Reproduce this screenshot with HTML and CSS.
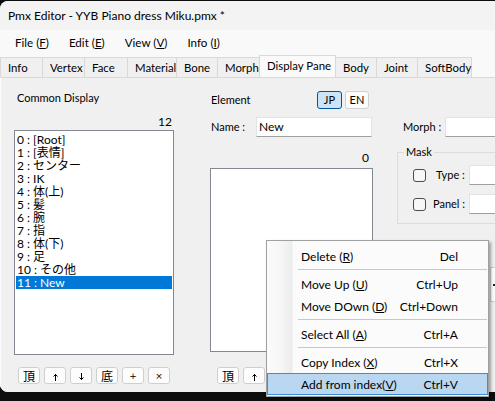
FILE: index.html
```html
<!DOCTYPE html>
<html lang="ja">
<head>
<meta charset="utf-8">
<title>Pmx Editor</title>
<link rel="stylesheet" href="styles.css">
</head>
<body>
<div class="screen">
  <div class="window">
    <div class="titlebar">Pmx Editor - YYB Piano dress Miku.pmx *</div>
    <div class="menubar">
      <span class="mi">File (<u>F</u>)</span>
      <span class="mi">Edit (<u>E</u>)</span>
      <span class="mi">View (<u>V</u>)</span>
      <span class="mi">Info (<u>I</u>)</span>
    </div>
    <div class="tabs">
      <div class="tab first t43">Info</div>
      <div class="tab t42">Vertex</div>
      <div class="tab t43">Face</div>
      <div class="tab t49">Material</div>
      <div class="tab t41">Bone</div>
      <div class="tab t42">Morph</div>
      <div class="tab active t76">Display Pane</div>
      <div class="tab t41">Body</div>
      <div class="tab t41">Joint</div>
      <div class="tab t54">SoftBody</div>
    </div>
    <div class="panel">
      <div class="col col-left">
        <div class="label head">Common Display</div>
        <div class="count">12</div>
        <div class="listbox main">
          <div class="item">0 : [Root]</div>
          <div class="item">1 : [表情]</div>
          <div class="item">2 : センター</div>
          <div class="item">3 : IK</div>
          <div class="item">4 : 体(上)</div>
          <div class="item">5 : 髪</div>
          <div class="item">6 : 腕</div>
          <div class="item">7 : 指</div>
          <div class="item">8 : 体(下)</div>
          <div class="item">9 : 足</div>
          <div class="item">10 : その他</div>
          <div class="item sel">11 : New</div>
        </div>
        <div class="btnrow">
          <div class="sb">頂</div>
          <div class="sb"><svg width="7" height="8" viewBox="0 0 7 8"><path d="M3.5 1V8M1.5 3.5L3.5 1.5L5.5 3.5" fill="none" stroke="#000" stroke-width="1"/></svg></div>
          <div class="sb"><svg width="7" height="8" viewBox="0 0 7 8"><path d="M3.5 0V7M1.5 4.5L3.5 6.5L5.5 4.5" fill="none" stroke="#000" stroke-width="1"/></svg></div>
          <div class="sb">底</div>
          <div class="sb small">+</div>
          <div class="sb small">×</div>
        </div>
      </div>
      <div class="col col-mid">
        <div class="elem-head">
          <span class="label">Element</span>
          <div class="lang">
            <div class="lb on">JP</div>
            <div class="lb">EN</div>
          </div>
        </div>
        <div class="field">
          <span class="label name-label">Name :</span>
          <div class="input name-input">New</div>
        </div>
        <div class="count">0</div>
        <div class="listbox mid"></div>
        <div class="btnrow mid-btns">
          <div class="sb">頂</div>
          <div class="sb"><svg width="7" height="8" viewBox="0 0 7 8"><path d="M3.5 1V8M1.5 3.5L3.5 1.5L5.5 3.5" fill="none" stroke="#000" stroke-width="1"/></svg></div>
        </div>
      </div>
      <div class="col col-right">
        <div class="field morph">
          <span class="label morph-label">Morph :</span>
          <div class="input wide"></div>
        </div>
        <fieldset class="mask">
          <legend>Mask</legend>
          <div class="chkrow">
            <span class="chk"></span>
            <span class="label type-label">Type :</span>
            <div class="input wide"></div>
          </div>
          <div class="chkrow">
            <span class="chk"></span>
            <span class="label panel-label">Panel :</span>
            <div class="input wide"></div>
          </div>
        </fieldset>
        <div class="sidebtn"><span class="tick"></span></div>
      </div>
    </div>
  </div>

  <div class="ctxmenu">
    <div class="mitem"><span>Delete (<u>R</u>)</span><span>Del</span></div>
    <div class="msep"></div>
    <div class="mitem"><span>Move Up (<u>U</u>)</span><span>Ctrl+Up</span></div>
    <div class="mitem"><span>Move DOwn (<u>D</u>)</span><span>Ctrl+Down</span></div>
    <div class="msep"></div>
    <div class="mitem"><span>Select All (<u>A</u>)</span><span>Ctrl+A</span></div>
    <div class="msep"></div>
    <div class="mitem"><span>Copy Index (<u>X</u>)</span><span>Ctrl+X</span></div>
    <div class="mitem hot"><span>Add from index(<u>V</u>)</span><span>Ctrl+V</span></div>
  </div>
</div>
</body>
</html>
```

FILE: styles.css
```css
html, body {
  margin: 0;
  padding: 0;
  overflow: hidden;
  background: #0d0d0d;
  width: 495px;
  height: 401px;
}

.screen {
  position: relative;
  width: 495px;
  height: 401px;
  overflow: hidden;
}

.window {
  margin-top: 1px;
  width: 530px;
  height: 391px;
  border-radius: 8px 8px 0 8px;
  overflow: hidden;
  background: #f0f0f0;
  display: flex;
  flex-direction: column;
  color: #000;
}

.titlebar {
  height: 29px;
  line-height: 30px;
  background: #f3f3f3;
  padding-left: 8px;
  font-family: Lato, "Noto Sans", sans-serif;
  font-size: 12px;
  flex: none;
}

.menubar {
  height: 25px;
  background: #f9f9f9;
  display: flex;
  align-items: center;
  padding-left: 5px;
  font-family: Lato, "Noto Sans", sans-serif;
  font-size: 11.6px;
  flex: none;
}

.mi {
  padding: 0 10px;
}

.tabs {
  height: 22px;
  background: #f9f9f9;
  display: flex;
  align-items: flex-end;
  flex: none;
}

.tab {
  box-sizing: border-box;
  height: 20px;
  line-height: 19px;
  padding-left: 7px;
  background: #f0f0f0;
  border-top: 1px solid #d9d9d9;
  border-right: 1px solid #d9d9d9;
  font-family: Lato, "Noto Sans CJK JP", sans-serif;
  font-size: 11.4px;
  white-space: nowrap;
}

.tab.first { border-left: 1px solid #d9d9d9; }

.tab.active {
  height: 22px;
  line-height: 19px;
  padding-bottom: 2px;
  background: #fafafa;
  border-left: 1px solid #d9d9d9;
  margin-left: -1px;
}

.t41 { width: 41px; }
.t42 { width: 42px; }
.t43 { width: 43px; }
.t49 { width: 49px; }
.t54 { width: 54px; }
.t76 { width: 77px; }

.panel {
  flex: 1;
  display: flex;
  align-items: flex-start;
  background: #f0f0f0;
  border-top: 1px solid #d9d9d9;
  border-left: 1px solid #fcfcfc;
  font-family: Lato, "Noto Sans CJK JP", sans-serif;
  font-size: 11px;
}

.col {
  display: flex;
  flex-direction: column;
  flex: none;
}

.label {
  line-height: 14px;
  white-space: nowrap;
}

.col-left {
  margin-left: 13px;
  width: 160px;
}

.head {
  margin-top: 13px;
  padding-left: 3px;
}

.count {
  line-height: 14px;
  text-align: right;
  padding-right: 2px;
  margin-top: 10px;
  font-size: 12px;
}

.listbox {
  box-sizing: border-box;
  background: #fff;
  border: 1px solid #828790;
}

.listbox.main {
  height: 225px;
  margin-top: 1px;
  padding-top: 2px;
}

.item {
  height: 13px;
  line-height: 13px;
  padding-left: 1px;
  margin: 0 1px;
  white-space: nowrap;
  font-size: 12px;
}

.item.sel {
  background: #0078d7;
  color: #fff;
}

.btnrow {
  display: flex;
  gap: 4px;
  margin-top: 12px;
  padding-left: 4px;
}

.sb {
  box-sizing: border-box;
  width: 22px;
  height: 17px;
  border: 1px solid #cfcfcf;
  border-radius: 3px;
  background: #fdfdfd;
  display: flex;
  align-items: center;
  justify-content: center;
  font-family: "Noto Sans CJK JP", sans-serif;
  font-size: 12px;
  line-height: 14px;
}

.sb svg { margin-top: 3px; }

.sb.small {
  font-family: "DejaVu Sans", sans-serif;
  font-size: 9px;
  padding-top: 1px;
}

.col-mid {
  margin-left: 36px;
  width: 163px;
}

.elem-head {
  margin-top: 13px;
  height: 18px;
  display: flex;
  align-items: center;
  justify-content: space-between;
  padding-left: 1px;
  padding-right: 4px;
}

.lang {
  display: flex;
  gap: 3px;
}

.lb {
  box-sizing: border-box;
  height: 18px;
  width: 24px;
  border: 1px solid #d0d0d0;
  border-radius: 3px;
  background: #fdfdfd;
  font-size: 11px;
  line-height: 16px;
  text-align: center;
}

.lb.on {
  width: 25px;
  background: #cce4f7;
  border-color: #005499;
}

.field {
  display: flex;
  align-items: center;
  height: 20px;
  margin-top: 8px;
}

.name-label {
  padding-left: 1px;
  width: 45px;
}

.input {
  box-sizing: border-box;
  height: 20px;
  background: #fff;
  border: 1px solid #e3e3e3;
  border-bottom-color: #a0a0a0;
  line-height: 18px;
  padding-left: 2px;
  font-size: 12px;
}

.name-input {
  width: 116px;
}

.col-mid .count {
  margin-top: 14px;
  padding-right: 4px;
}

.listbox.mid {
  margin-top: 3px;
  height: 184px;
}

.mid-btns {
  margin-top: 15px;
  padding-left: 7px;
}

.col-right {
  margin-left: 24px;
  width: 140px;
}

.morph {
  margin-top: 39px;
  padding-left: 6px;
}

.morph-label {
  width: 42px;
}

.input.wide {
  flex: 1;
}

.mask {
  margin: 8px 0 0 0;
  padding: 0 0 9px 15px;
  border: 1px solid #dcdcdc;
  border-right: none;
  min-width: 0;
}

.mask legend {
  padding: 0 2px;
  margin-left: -9px;
  line-height: 14px;
}

.chkrow {
  display: flex;
  align-items: center;
  height: 20px;
  margin-top: 6px;
}

.chkrow + .chkrow {
  margin-top: 9px;
}

.chk {
  box-sizing: border-box;
  width: 13px;
  height: 13px;
  border: 1px solid #4d4d4d;
  border-radius: 3px;
  background: #f7f7f7;
  flex: none;
}

.type-label {
  margin-left: 10px;
  width: 33px;
}

.panel-label {
  margin-left: 7px;
  width: 36px;
}

.sidebtn {
  margin-top: 43px;
  margin-left: 93px;
  box-sizing: border-box;
  width: 30px;
  height: 35px;
  border: 1px solid #d0d0d0;
  background: #fdfdfd;
  display: flex;
  align-items: center;
  padding-left: 2px;
}

.tick {
  width: 3px;
  height: 2px;
  background: #222;
}

.ctxmenu {
  position: absolute;
  left: 266px;
  top: 240px;
  width: 223px;
  box-sizing: border-box;
  border: 1px solid #a0a0a0;
  padding: 4px 0 1px;
  background: linear-gradient(to right, #fbfbfb 0, #f6f6f6 14px, #ececec 25px, #fbfbfb 26px, #fbfbfb 100%);
  box-shadow: 2px 2px 3px rgba(0, 0, 0, 0.35);
  font-family: Lato, "Noto Sans", sans-serif;
  font-size: 12px;
}

.mitem {
  box-sizing: border-box;
  height: 22px;
  display: flex;
  align-items: center;
  justify-content: space-between;
  padding: 0 29px 0 33px;
  border: 1px solid transparent;
  white-space: nowrap;
}

.mitem.hot {
  background: #bad7f1;
  border-color: #3d8ed8;
}

.msep {
  height: 1px;
  background: #c8c8c8;
  margin: 2px 1px 3px 31px;
}
```
